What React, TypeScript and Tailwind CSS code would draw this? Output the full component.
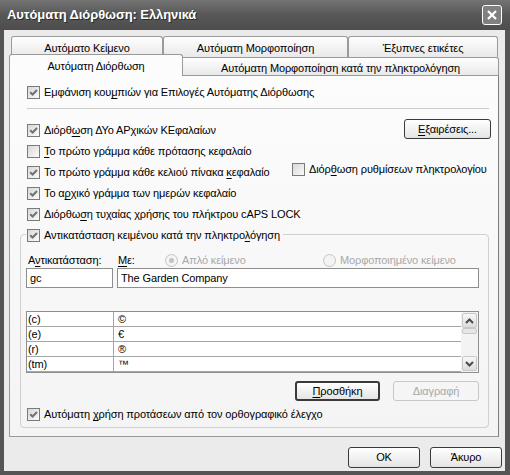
import type { ReactNode } from "react";

function U({ children }: { children: ReactNode }) {
  return <span className="underline decoration-1 underline-offset-[2px]">{children}</span>;
}

function Check({ checked }: { checked?: boolean }) {
  return (
    <span className="w-[13px] h-[13px] shrink-0 border border-[#7a7a7a] bg-linear-to-br from-[#d8d8d8] to-[#fbfbfb] flex items-center justify-center">
      {checked && (
        <svg width="9" height="9" viewBox="0 0 9 9">
          <path d="M1.2 4.2 L3.6 6.6 L8 2" stroke="#737373" strokeWidth="2.1" fill="none" />
        </svg>
      )}
    </span>
  );
}

function CheckRow({ checked, children, className = "" }: { checked?: boolean; children: ReactNode; className?: string }) {
  return (
    <div className={`flex items-center gap-[4px] h-[15px] ${className}`}>
      <Check checked={checked} />
      <span className="whitespace-nowrap">{children}</span>
    </div>
  );
}

function Radio({ on, children }: { on?: boolean; children: ReactNode }) {
  return (
    <div className="flex items-center gap-[4px] text-[#a8a8a8]">
      <span className="w-[13px] h-[13px] rounded-full border border-[#c4c4c4] bg-[#f4f4f4] flex items-center justify-center">
        {on && <span className="w-[5px] h-[5px] rounded-full bg-[#c2c2c2]" />}
      </span>
      <span>{children}</span>
    </div>
  );
}

function Button({ children, className = "", def, disabled }: { children: ReactNode; className?: string; def?: boolean; disabled?: boolean }) {
  const border = disabled
    ? "border border-[#c8c8c8] text-[#a8a8a8] bg-[#f5f5f5]"
    : def
      ? "border-2 border-[#3a3a3a] bg-linear-to-b from-[#ffffff] to-[#e4e4e4]"
      : "border border-[#3a3a3a] bg-linear-to-b from-[#ffffff] to-[#e4e4e4]";
  return (
    <div className={`h-[20px] rounded-[3px] flex items-center justify-center ${border} ${className}`}>
      {children}
    </div>
  );
}

function Chevron({ up }: { up?: boolean }) {
  return (
    <svg width="9" height="6" viewBox="0 0 9 6">
      <path d={up ? "M1 5 L4.5 1.5 L8 5" : "M1 1 L4.5 4.5 L8 1"} stroke="#4a4a4a" strokeWidth="2" fill="none" />
    </svg>
  );
}

const entries = [
  ["(c)", "©"],
  ["(e)", "€"],
  ["(r)", "®"],
  ["(tm)", "™"],
];

export default function App() {
  return (
    <div className="w-[510px] h-[475px] bg-[#555555] flex flex-col font-['Liberation_Sans',sans-serif] text-[11px] tracking-[-0.12px] text-black">
      {/* title bar */}
      <div className="h-[30px] shrink-0 flex items-center justify-between pl-[7px] pr-[8px] bg-linear-to-b from-[#747474] via-[#575757] to-[#4d4d4d]">
        <span className="text-white font-bold text-[13px] tracking-[-0.1px] [text-shadow:1px_1px_#2a2a2a]">Αυτόματη Διόρθωση: Ελληνικά</span>
        <div className="w-[20px] h-[20px] rounded-[3px] border border-white bg-[#808080] flex items-center justify-center">
          <svg width="12" height="12" viewBox="0 0 12 12">
            <path d="M2 2 L10 10 M10 2 L2 10" stroke="white" strokeWidth="2.2" />
          </svg>
        </div>
      </div>

      {/* body */}
      <div className="flex-1 ml-[4px] mr-[5px] mb-[4px] bg-[#ebebeb] flex flex-col pl-[5px] pr-[3px]">
        {/* tabs */}
        <div className="flex pl-[2px] h-[21px] mt-[6px]">
          {["Αυτόματο Κείμενο", "Αυτόματη Μορφοποίηση", "Έξυπνες ετικέτες"].map((t, i) => (
            <div
              key={t}
              className={`${["w-[152px]", "w-[185px]", "w-[150px]"][i]} h-full border border-b-0 border-[#9a9a9a] rounded-t-[3px] bg-linear-to-b from-[#fefefe] to-[#e9e9e9] flex justify-center pt-[3px]`}
            >
              {t}
            </div>
          ))}
        </div>
        <div className="flex items-end h-[18px]">
          <div className="w-[174px] h-[22px] -mb-px relative z-10 border border-b-0 border-[#9a9a9a] rounded-t-[3px] bg-[#fcfcfc] flex justify-center pt-[3px]">
            Αυτόματη Διόρθωση
          </div>
          <div className="w-[316px] h-full border border-b-0 border-l-0 border-[#9a9a9a] rounded-tr-[3px] bg-linear-to-b from-[#fefefe] to-[#e9e9e9] flex justify-center pt-[2px]">
            Αυτόματη Μορφοποίηση κατά την πληκτρολόγηση
          </div>
        </div>

        {/* panel */}
        <div className="w-[490px] h-[362px] border border-[#9a9a9a] border-r-[#7d7d7d] bg-linear-to-b from-[#fcfcfc] to-[#f4f4f4] pl-[10px] pr-[9px] pt-[9px] flex flex-col">
          <CheckRow checked className="pl-[7px]">
            Εμφάνιση κου<U>μ</U>πιών για Επιλογές Αυτόματης Διόρθωσης
          </CheckRow>
          <div className="h-px bg-[#cbcbcb] ml-[7px] mt-[8px]" />

          <div className="flex flex-col mt-[11px] pl-[7px]">
            <div className="h-[21px] flex items-center justify-between">
              <CheckRow checked>
                Διόρθ<U>ω</U>ση ΔΥο ΑΡχικών ΚΕφαλαίων
              </CheckRow>
              <Button className="w-[87px] mb-[3px] -mr-[2px]">
                <span>
                  <U>Ε</U>ξαιρέσεις...
                </span>
              </Button>
            </div>
            <div className="h-[21px] flex items-center">
              <CheckRow>
                <U>Τ</U>ο πρώτο γράμμα κάθε πρότασης κεφαλαίο
              </CheckRow>
            </div>
            <div className="h-[21px] flex items-center">
              <CheckRow checked className="w-[265px]">
                Το πρώτο γράμμα κάθε κελιού πίνακα <U>κ</U>εφαλαίο
              </CheckRow>
              <CheckRow className="mb-[6px]">
                Διόρ<U>θ</U>ωση ρυθμίσεων πληκτρολογίου
              </CheckRow>
            </div>
            <div className="h-[21px] flex items-center">
              <CheckRow checked>
                Το α<U>ρ</U>χικό γράμμα των ημερών κεφαλαίο
              </CheckRow>
            </div>
            <div className="h-[21px] flex items-center">
              <CheckRow checked>
                Διόρθω<U>σ</U>η τυχαίας χρήσης του πλήκτρου cAPS LOCK
              </CheckRow>
            </div>
          </div>

          {/* group box */}
          <div className="mt-[9px] border border-[#d0d0d0] rounded-[4px] flex flex-col pl-[5px] pr-[9px] pb-[5px]">
            <div className="-mt-[7px] flex">
              <div className="bg-[#f8f8f8] pl-[1px] pr-[3px]">
                <CheckRow checked>
                  Αντικατάσταση κειμένου κατά την πληκτρο<U>λ</U>όγηση
                </CheckRow>
              </div>
            </div>

            <div className="flex items-center h-[15px] mt-[10px]">
              <span className="w-[91px] pl-[2px]">
                Α<U>ν</U>τικατάσταση:
              </span>
              <span className="w-[48px] pl-[1px]">
                <U>Μ</U>ε:
              </span>
              <div className="w-[158px]">
                <Radio on>Απλό κείμενο</Radio>
              </div>
              <Radio>Μορφοποιημένο κείμενο</Radio>
            </div>

            <div className="flex gap-[4px] h-[20px]">
              <div className="w-[87px] border border-[#8e8e8e] bg-white flex items-center pl-[3px]">gc</div>
              <div className="flex-1 border border-[#8e8e8e] bg-white flex items-center pl-[3px]">The Garden Company</div>
            </div>

            <div className="mt-[23px] h-[62px] border border-[#8e8e8e] bg-white flex">
              <div className="flex-1 flex flex-col">
                {entries.map(([a, b]) => (
                  <div key={a} className="h-[15px] border-b border-[#a6a6a6] flex">
                    <div className="w-[87px] border-r border-[#a6a6a6] pl-[1px] leading-[14px]">{a}</div>
                    <div className="pl-[4px] leading-[14px]">{b}</div>
                  </div>
                ))}
              </div>
              <div className="w-[17px] bg-[#f3f3f3] flex flex-col items-center py-px">
                <div className="w-[15px] h-[15px] rounded-[2px] border border-[#c8c8c8] bg-linear-to-b from-[#f8f8f8] to-[#dcdcdc] flex items-center justify-center">
                  <Chevron up />
                </div>
                <div className="w-[15px] h-[6px] rounded-[2px] border border-[#c8c8c8] bg-[#e6e6e6]" />
                <div className="flex-1" />
                <div className="w-[15px] h-[15px] rounded-[2px] border border-[#c8c8c8] bg-linear-to-b from-[#f8f8f8] to-[#dcdcdc] flex items-center justify-center">
                  <Chevron />
                </div>
              </div>
            </div>

            <div className="flex justify-end gap-[13px] mt-[8px]">
              <Button def className="w-[85px]">
                <span>
                  <U>Π</U>ροσθήκη
                </span>
              </Button>
              <Button disabled className="w-[86px]">
                Διαγραφή
              </Button>
            </div>

            <CheckRow checked className="mt-[6px] pl-[1px]">
              Αυτόματη <U>χ</U>ρήση προτάσεων από τον ορθογραφικό έλεγχο
            </CheckRow>
          </div>
        </div>

        {/* dialog buttons */}
        <div className="flex justify-end gap-[10px] mt-[10px]">
          <Button className="w-[72px] h-[21px]">OK</Button>
          <Button className="w-[72px] h-[21px]">Άκυρο</Button>
        </div>
      </div>
    </div>
  );
}
